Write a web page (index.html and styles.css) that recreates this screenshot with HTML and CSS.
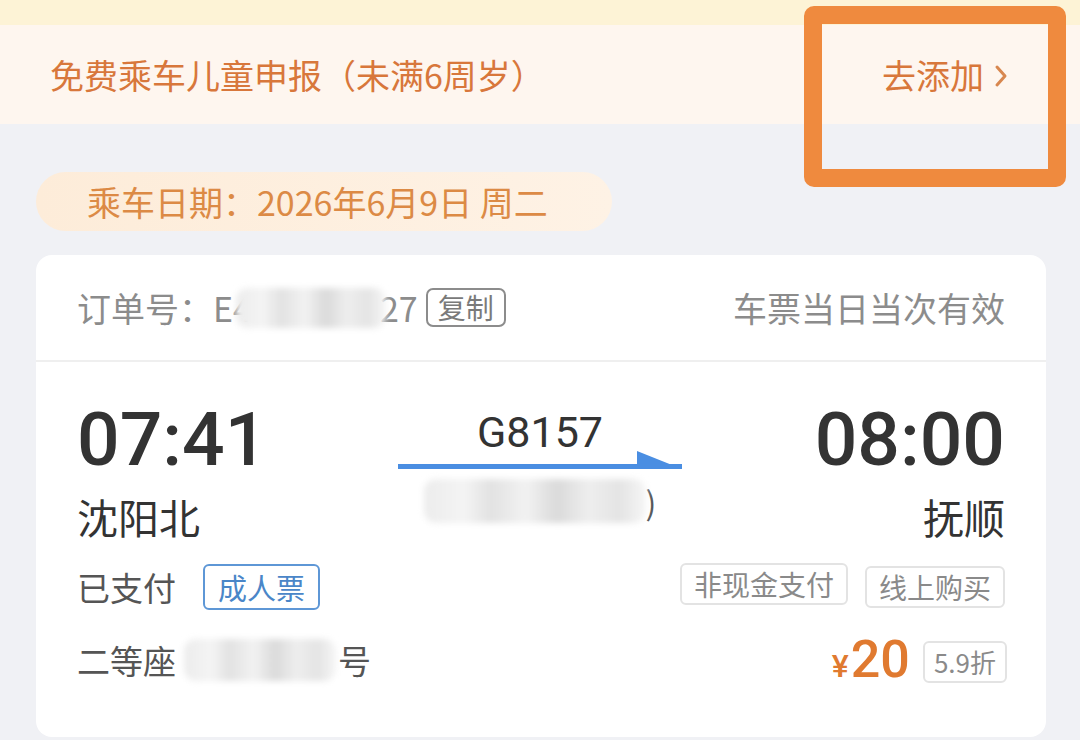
FILE: index.html
```html
<!DOCTYPE html>
<html lang="zh-CN">
<head>
    <meta charset="UTF-8">
    <meta name="viewport" content="width=device-width, initial-scale=1.0">
    <title>订单详情</title>
    <link rel="stylesheet" href="styles.css">
</head>
<body>
    <div class="top-strip"></div>

    <!-- 儿童申报提示 -->
    <div class="child-banner">
        <span>免费乘车儿童申报（未满6周岁）</span>
        <span class="child-add">去添加
            <svg class="chevron" width="14" height="24" viewBox="0 0 14 24">
                <polyline points="3,3 11,12 3,21" fill="none" stroke="#d8874f" stroke-width="3" stroke-linecap="round" stroke-linejoin="round"/>
            </svg>
        </span>
    </div>

    <div class="mark-box"></div>

    <div class="date-pill">乘车日期：2026年6月9日 周二</div>

    <div class="ticket-card">
        <div class="card-head">
            <div class="order-no">
                订单号：E4<span class="blur blur-order"></span>27
                <span class="copy-btn">复制</span>
            </div>
            <div class="valid-note">车票当日当次有效</div>
        </div>

        <div class="card-body">
            <div class="trip">
                <div class="stop">
                    <div class="time">07:41</div>
                    <div class="station">沈阳北</div>
                </div>
                <div class="train">
                    <div class="train-no">G8157</div>
                    <svg class="arrow" width="284" height="19" viewBox="0 0 284 19">
                        <rect x="0" y="13" width="284" height="5" fill="#4a8ee2"/>
                        <polygon points="239,0 284,18 239,18" fill="#4a8ee2"/>
                    </svg>
                    <div class="train-sub"><span class="blur blur-train"></span>)</div>
                </div>
                <div class="stop stop-end">
                    <div class="time">08:00</div>
                    <div class="station">抚顺</div>
                </div>
            </div>

            <div class="info-row">
                <div class="info-left">
                    已支付 <span class="tag tag-blue">成人票</span>
                </div>
                <div class="info-right">
                    <span class="tag tag-grey">非现金支付</span>
                    <span class="tag tag-grey">线上购买</span>
                </div>
            </div>

            <div class="info-row">
                <div class="info-left">
                    二等座<span class="blur blur-seat"></span>号
                </div>
                <div class="info-right">
                    <span class="price"><span class="yen">¥</span>20</span>
                    <span class="tag tag-grey tag-small">5.9折</span>
                </div>
            </div>
        </div>
    </div>
</body>
</html>
```

FILE: styles.css
```css
body {
    margin: 0;
    background: #f0f1f5;
    font-family: "Noto Sans CJK SC", "Noto Sans", sans-serif;
    color: #333;
    position: relative;
    height: 740px;
    overflow: hidden;
}

.top-strip {
    height: 25px;
    background: #fdf3d6;
}

.child-banner {
    height: 99px;
    background: #fef6ef;
    display: flex;
    align-items: center;
    justify-content: space-between;
    padding: 0 72px 0 50px;
    font-size: 34px;
    color: #d8773b;
}

.child-add {
    display: flex;
    align-items: center;
    gap: 10px;
}

.chevron {
    display: block;
    margin-top: 2px;
}

.mark-box {
    position: absolute;
    left: 804px;
    top: 6px;
    width: 226px;
    height: 145px;
    border: 18px solid #ef8a3e;
    border-radius: 10px;
}

.date-pill {
    margin: 48px 0 0 36px;
    width: 576px;
    height: 59px;
    box-sizing: border-box;
    padding-left: 51px;
    border-radius: 30px;
    background: linear-gradient(90deg, #fdecd9, #fef2e5);
    display: flex;
    align-items: center;
    font-size: 34px;
    color: #dc8a45;
}

.ticket-card {
    margin: 24px 34px 0 36px;
    background: #fff;
    border-radius: 16px;
    height: 482px;
}

.card-head {
    height: 105px;
    padding: 0 41px;
    display: flex;
    align-items: center;
    justify-content: space-between;
    border-bottom: 2px solid #efefef;
    font-size: 34px;
    color: #8c8c8c;
}

.order-no {
    display: flex;
    align-items: center;
}

.copy-btn {
    margin-left: 8px;
    font-size: 28px;
    line-height: 35px;
    padding: 0 10px;
    border: 2px solid #8c8c8c;
    border-radius: 7px;
    color: #7a7a7a;
}

.blur {
    display: inline-block;
    background: linear-gradient(90deg, #ececec 0%, #f4f4f4 18%, #e2e2e2 30%, #f2f2f2 46%, #dadada 60%, #eeeeee 74%, #e4e4e4 88%, #f6f6f6 100%);
    filter: blur(3px);
    border-radius: 12px;
}

.blur-order {
    width: 150px;
    height: 40px;
    margin: 0 -6px 0 -16px;
}

.card-body {
    padding: 37px 41px 0;
}

.trip {
    display: flex;
    justify-content: space-between;
}

.time {
    font-family: Roboto, "Noto Sans", sans-serif;
    font-weight: 500;
    font-size: 75px;
    line-height: 80px;
    color: #333;
}

.station {
    margin-top: 12px;
    font-size: 41px;
    line-height: 50px;
    color: #333;
}

.stop-end {
    text-align: right;
}

.train {
    display: flex;
    flex-direction: column;
    align-items: center;
    width: 284px;
    margin-right: 2px;
}

.train-no {
    font-family: Roboto, "Noto Sans", sans-serif;
    font-size: 43px;
    line-height: 50px;
    margin-top: 8px;
    color: #333;
}

.arrow {
    display: block;
    margin-top: -6px;
}

.train-sub {
    display: flex;
    align-items: center;
    margin-top: 8px;
    font-size: 32px;
    color: #555;
}

.blur-train {
    width: 222px;
    height: 44px;
}

.info-row {
    display: flex;
    justify-content: space-between;
    align-items: center;
    height: 48px;
    margin-top: 22px;
}

.info-row + .info-row {
    margin-top: 25px;
}

.info-left {
    display: flex;
    align-items: center;
    font-size: 33px;
    color: #555;
}

.info-right {
    display: flex;
    align-items: center;
    gap: 17px;
}

.tag {
    display: inline-block;
    border-radius: 6px;
    line-height: 38px;
}

.tag-blue {
    margin-left: 27px;
    padding: 2px 13px;
    font-size: 29px;
    color: #4a86c8;
    border: 2px solid #5e97d6;
}

.tag-grey {
    padding: 0 12px;
    font-size: 28px;
    color: #8a8a8a;
    border: 2px solid #e3e3e3;
}

.info-right .tag-grey:first-child {
    margin-top: -6px;
}

.tag-small {
    margin-top: 4px;
    font-size: 26px;
    padding: 0 9px;
    margin-right: -2px;
}

.blur-seat {
    width: 152px;
    height: 42px;
    margin: 0 2px 0 8px;
}

.price {
    font-family: Roboto, "Noto Sans", sans-serif;
    font-weight: 500;
    font-size: 52px;
    color: #e07a30;
    line-height: 56px;
    margin-top: 6px;
    margin-right: -4px;
}

.yen {
    font-size: 32px;
    margin-right: 2px;
}
```
